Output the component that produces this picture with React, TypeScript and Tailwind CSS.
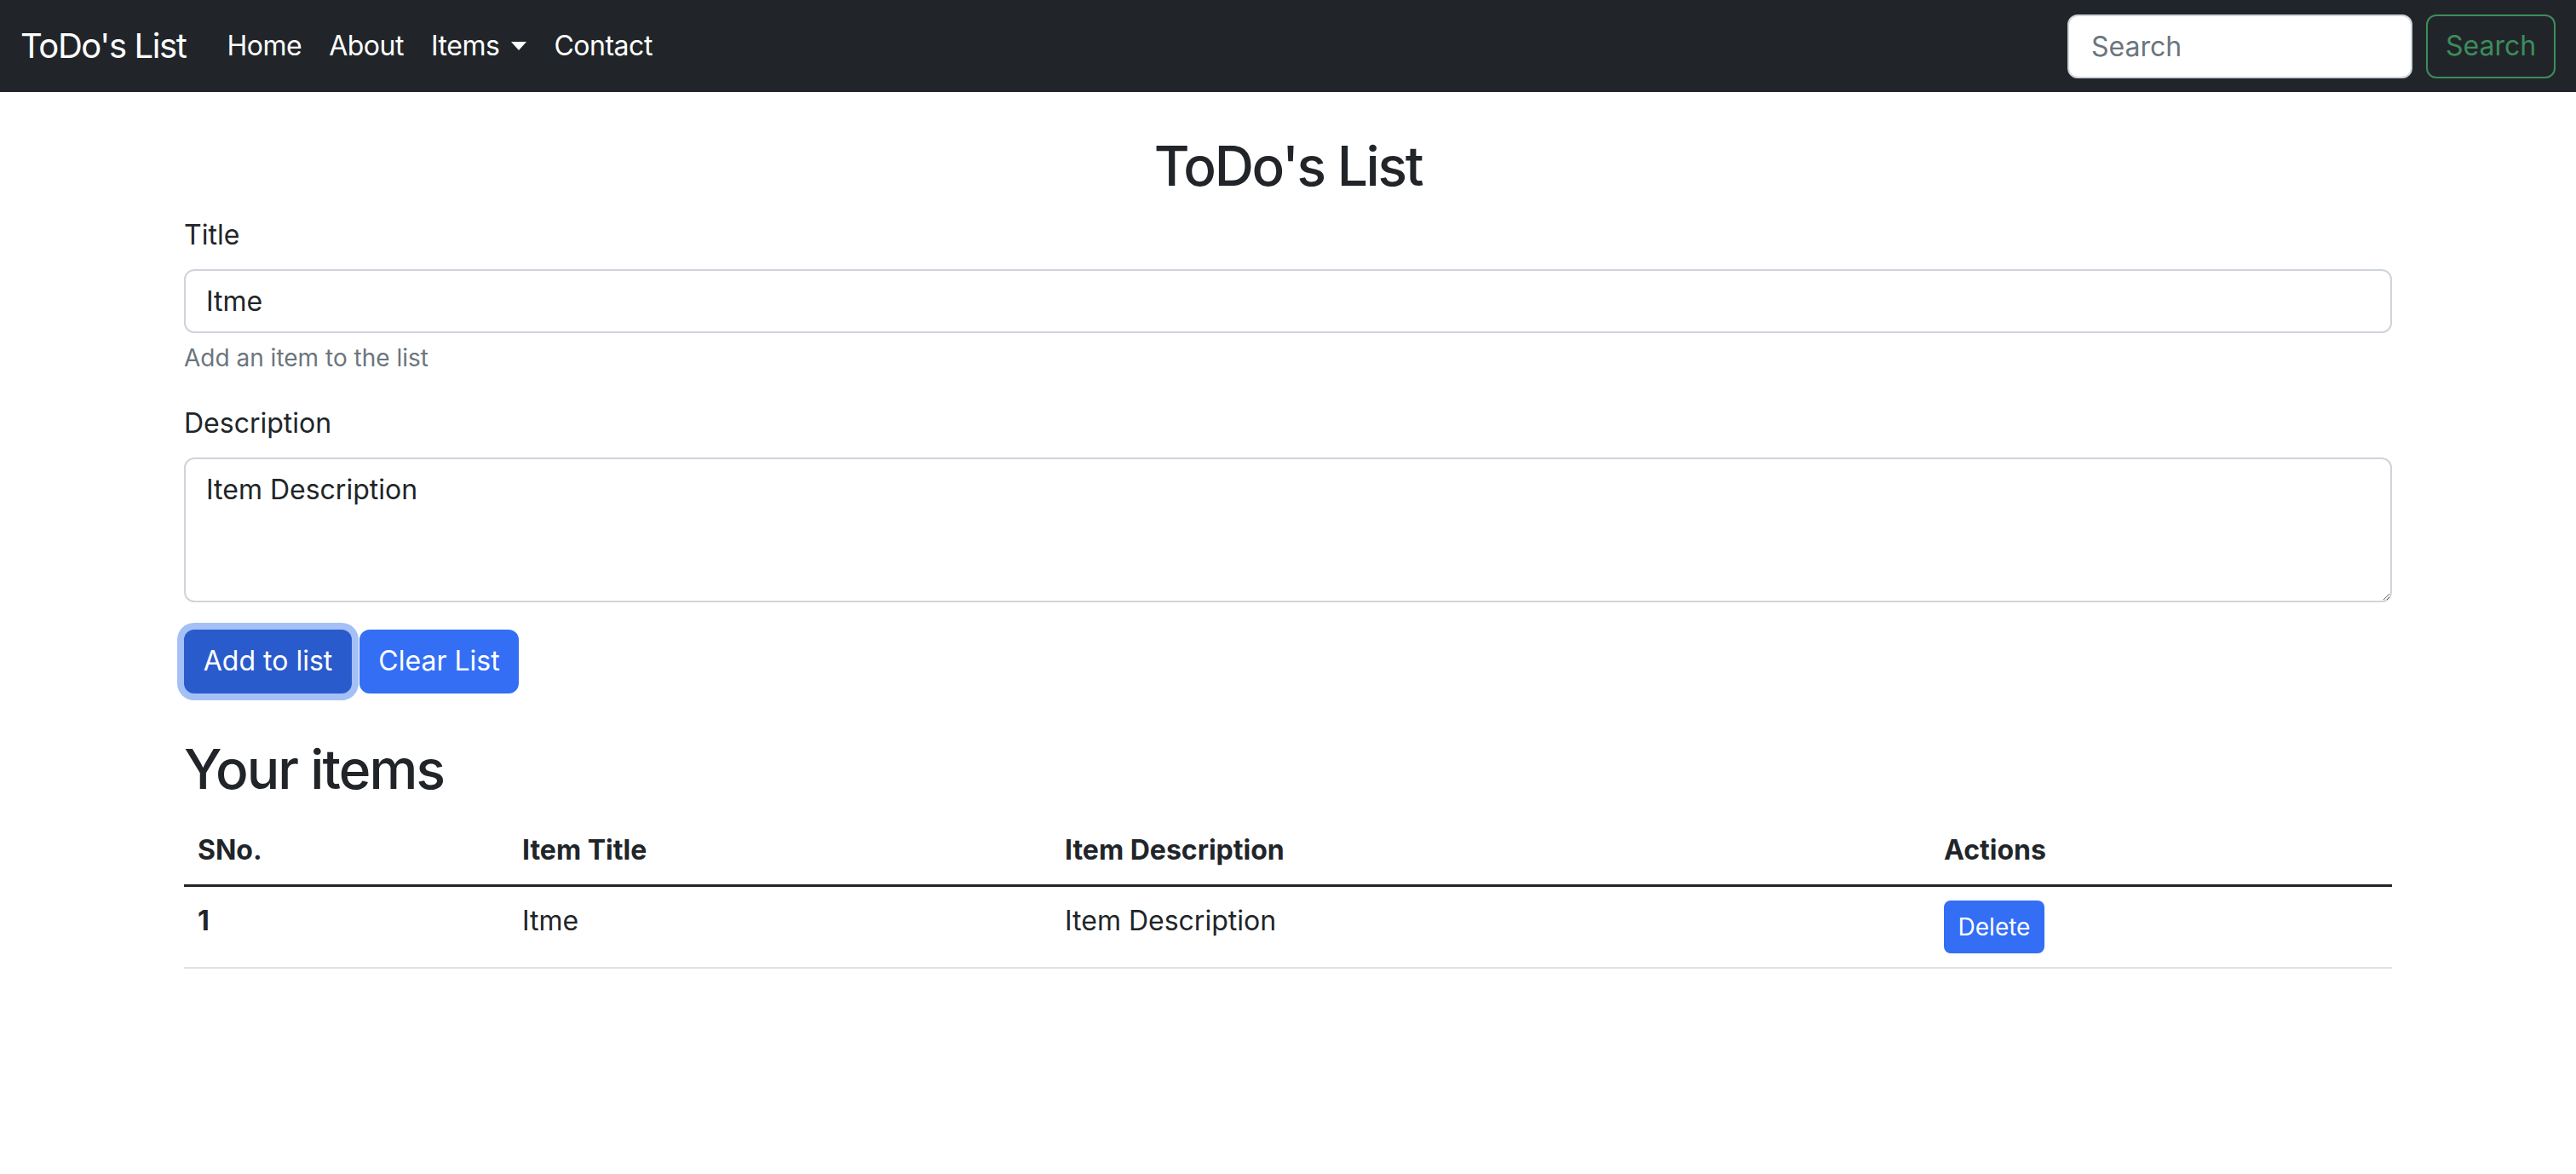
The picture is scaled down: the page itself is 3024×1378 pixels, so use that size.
import { useState } from "react";

type Todo = { sno: number; title: string; desc: string };

export default function App() {
  const [todos, setTodos] = useState<Todo[]>([
    { sno: 1, title: "Itme", desc: "Item Description" },
  ]);

  return (
    <div className="min-h-screen bg-white font-['Inter','Noto_Sans',sans-serif] text-[#212529]">
      {/* navbar */}
      <nav className="flex h-[108px] items-center bg-[#212529] px-[24px]">
        <a href="#" className="mr-[32px] text-[40px] leading-[60px] tracking-[-0.035em] text-white">
          ToDo's List
        </a>
        <ul className="flex items-center text-[32px] leading-[48px] tracking-[-0.015em] text-white">
          <li>
            <a href="#" className="block px-[16px] py-[16px]">Home</a>
          </li>
          <li>
            <a href="#" className="block px-[16px] py-[16px]">About</a>
          </li>
          <li>
            <a href="#" className="flex items-center px-[16px] py-[16px]">
              Items
              <span className="ml-[14px] inline-block border-x-[9px] border-t-[10px] border-x-transparent border-t-white" />
            </a>
          </li>
          <li>
            <a href="#" className="block px-[16px] py-[16px]">Contact</a>
          </li>
        </ul>
        <form className="ml-auto flex gap-[16px]" onSubmit={(e) => e.preventDefault()}>
          <input
            type="search"
            placeholder="Search"
            className="h-[75px] w-[405px] rounded-[12px] border-2 border-[#ced4da] bg-white px-[26px] text-[32px] text-[#212529] outline-none placeholder:text-[#6c757d]"
          />
          <button
            type="submit"
            className="h-[75px] w-[152px] rounded-[12px] border-2 border-[#3d8c5c] text-[32px] text-[#3d8c5c]"
          >
            Search
          </button>
        </form>
      </nav>

      <main className="mx-auto w-[2592px] pt-[49px]">
        <h2 className="mb-[18px] text-center text-[64px] font-medium leading-[1.2] tracking-[-0.035em]">
          ToDo's List
        </h2>

        <div className="mb-[32px]">
          <label className="mb-[16px] block text-[32px] leading-[48px]">Title</label>
          <input
            type="text"
            defaultValue="Itme"
            className="block h-[75px] w-full rounded-[12px] border-2 border-[#ced4da] px-[24px] text-[32px] leading-[48px] outline-none"
          />
          <div className="mt-[8px] text-[28px] leading-[42px] text-[#6c757d]">Add an item to the list</div>
        </div>

        <div className="mb-[32px]">
          <label className="mb-[16px] block text-[32px] leading-[48px]">Description</label>
          <textarea
            defaultValue="Item Description"
            className="block h-[170px] w-full rounded-[12px] border-2 border-[#ced4da] px-[24px] py-[12px] text-[32px] leading-[48px] outline-none"
          />
        </div>

        <div className="flex gap-[9px]">
          <button className="h-[75px] w-[197px] rounded-[12px] bg-[#2a5bcc] text-[32px] text-white ring-[8px] ring-[#a4c0f7]">
            Add to list
          </button>
          <button
            onClick={() => setTodos([])}
            className="h-[75px] w-[187px] rounded-[12px] bg-[#336ef5] text-[32px] text-white"
          >
            Clear List
          </button>
        </div>

        <h2 className="mb-[16px] mt-[51px] text-[64px] font-medium leading-[1.2] tracking-[-0.03em]">
          Your items
        </h2>

        <table className="w-full border-collapse text-left text-[32px] leading-[48px]">
          <thead>
            <tr className="border-b-[3px] border-[#212529]">
              <th className="w-[381px] p-[16px] font-bold">SNo.</th>
              <th className="w-[637px] p-[16px] font-bold">Item Title</th>
              <th className="w-[1032px] p-[16px] font-bold">Item Description</th>
              <th className="p-[16px] font-bold">Actions</th>
            </tr>
          </thead>
          <tbody>
            {todos.map((t) => (
              <tr key={t.sno} className="border-b-2 border-[#dee2e6] align-top">
                <th className="p-[16px] font-bold">{t.sno}</th>
                <td className="p-[16px]">{t.title}</td>
                <td className="p-[16px]">{t.desc}</td>
                <td className="p-[16px]">
                  <button
                    onClick={() => setTodos(todos.filter((x) => x.sno !== t.sno))}
                    className="h-[62px] w-[118px] rounded-[8px] bg-[#336ef5] text-[28px] leading-[42px] text-white"
                  >
                    Delete
                  </button>
                </td>
              </tr>
            ))}
          </tbody>
        </table>
      </main>
    </div>
  );
}
